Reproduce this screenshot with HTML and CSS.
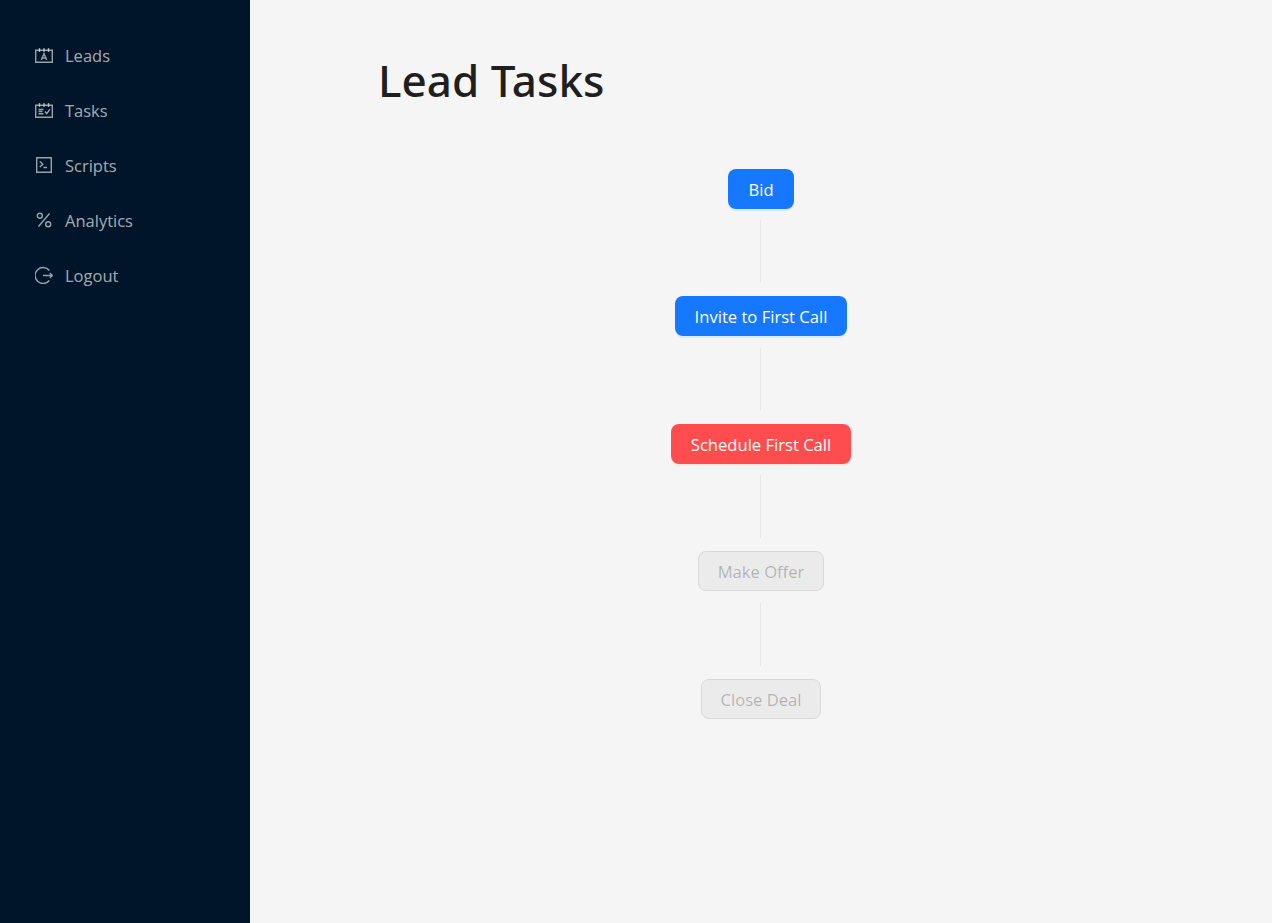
FILE: index.html
```html
<!DOCTYPE html>
<html lang="en">
<head>
    <meta charset="UTF-8">
    <meta name="viewport" content="width=device-width, initial-scale=1.0">
    <title>Lead Tasks</title>
    <link rel="stylesheet" href="styles.css">
</head>
<body>
    <div class="layout">
        <aside class="sidebar">
            <nav class="menu">
                <a class="menu-item" href="#">
                    <svg class="menu-icon" viewBox="0 0 18 18"><path d="M.7 4.2h16.6v12H.7z"/><path d="M4.5 2v4M9 2v4M13.5 2v4"/><path d="M6.3 14l2.7-6.5 2.7 6.5M7.2 12h3.6"/></svg>
                    <span>Leads</span>
                </a>
                <a class="menu-item" href="#">
                    <svg class="menu-icon" viewBox="0 0 18 18"><path d="M.7 4.2h16.6v12H.7z"/><path d="M4.5 2v4M9 2v4M13.5 2v4"/><path d="M3.5 8.5h5M3.5 10.5h4M3.5 12.8h5M10 10.5l1.8 2.2 3-4.4"/></svg>
                    <span>Tasks</span>
                </a>
                <a class="menu-item" href="#">
                    <svg class="menu-icon" viewBox="0 0 18 18"><path d="M1.7 1.7h14.6v14.6H1.7z"/><path d="M4.8 5.5l3 2.8-3 2.8M8.5 11.5h3.5"/></svg>
                    <span>Scripts</span>
                </a>
                <a class="menu-item" href="#">
                    <svg class="menu-icon" viewBox="0 0 18 18"><circle cx="4.8" cy="4.8" r="2.5"/><circle cx="13.2" cy="13.2" r="2.5"/><path d="M14.5 2.5l-11 13"/></svg>
                    <span>Analytics</span>
                </a>
                <a class="menu-item" href="#">
                    <svg class="menu-icon" viewBox="0 0 18 18"><path d="M14.3 4.5a8 8 0 1 0 0 10"/><path d="M8 9.5h9.3M14.8 7l2.5 2.5-2.5 2.5"/></svg>
                    <span>Logout</span>
                </a>
            </nav>
        </aside>
        <main class="content">
            <h1 class="page-title">Lead Tasks</h1>
            <div class="flow">
                <button class="step step-done">Bid</button>
                <div class="connector"></div>
                <button class="step step-done">Invite to First Call</button>
                <div class="connector"></div>
                <button class="step step-current">Schedule First Call</button>
                <div class="connector"></div>
                <button class="step step-locked" disabled>Make Offer</button>
                <div class="connector"></div>
                <button class="step step-locked" disabled>Close Deal</button>
            </div>
        </main>
    </div>
</body>
</html>
```
FILE: styles.css
```css
* {
    box-sizing: border-box;
}
body {
    margin: 0;
    font-family: "Open Sans", "Noto Sans", sans-serif;
    background-color: #f5f5f5;
}
.layout {
    display: flex;
    min-height: 923px;
}
.sidebar {
    width: 250px;
    flex-shrink: 0;
    background-color: #001529;
    padding-top: 27.5px;
}
.menu {
    display: flex;
    flex-direction: column;
}
.menu-item {
    display: flex;
    align-items: center;
    height: 55px;
    padding-left: 35px;
    color: rgba(255, 255, 255, 0.65);
    font-size: 16.5px;
    text-decoration: none;
}
.menu-icon {
    width: 18px;
    height: 18px;
    margin-right: 12px;
    fill: none;
    stroke: rgba(255, 255, 255, 0.6);
    stroke-width: 1.4;
}
.content {
    flex: 1;
    padding: 48px 129px 0 128px;
}
.page-title {
    margin: 0;
    color: #1f1f1f;
    font-family: "Noto Sans", "Open Sans", sans-serif;
    font-size: 44px;
    font-weight: 500;
    line-height: 64px;
}
.flow {
    display: flex;
    flex-direction: column;
    align-items: center;
    margin-top: 56.75px;
    margin-left: 1px;
}
.step {
    height: 40px;
    padding: 1px 19px 0;
    border: 1px solid transparent;
    border-radius: 8px;
    font-family: inherit;
    font-size: 16.6px;
    color: #fff;
}
.step-done {
    background-color: #1677ff;
    box-shadow: 0 2px 0 rgba(5, 145, 255, 0.1);
}
.step-current {
    background-color: #ff4d4f;
    box-shadow: 0 2px 0 rgba(255, 38, 5, 0.06);
}
.step-locked {
    background-color: rgba(0, 0, 0, 0.04);
    border-color: #d9d9d9;
    color: rgba(0, 0, 0, 0.25);
}
.connector {
    width: 1px;
    height: 63px;
    margin: 11.5px 1px 13px 0;
    background-color: rgba(5, 5, 5, 0.06);
}
```
